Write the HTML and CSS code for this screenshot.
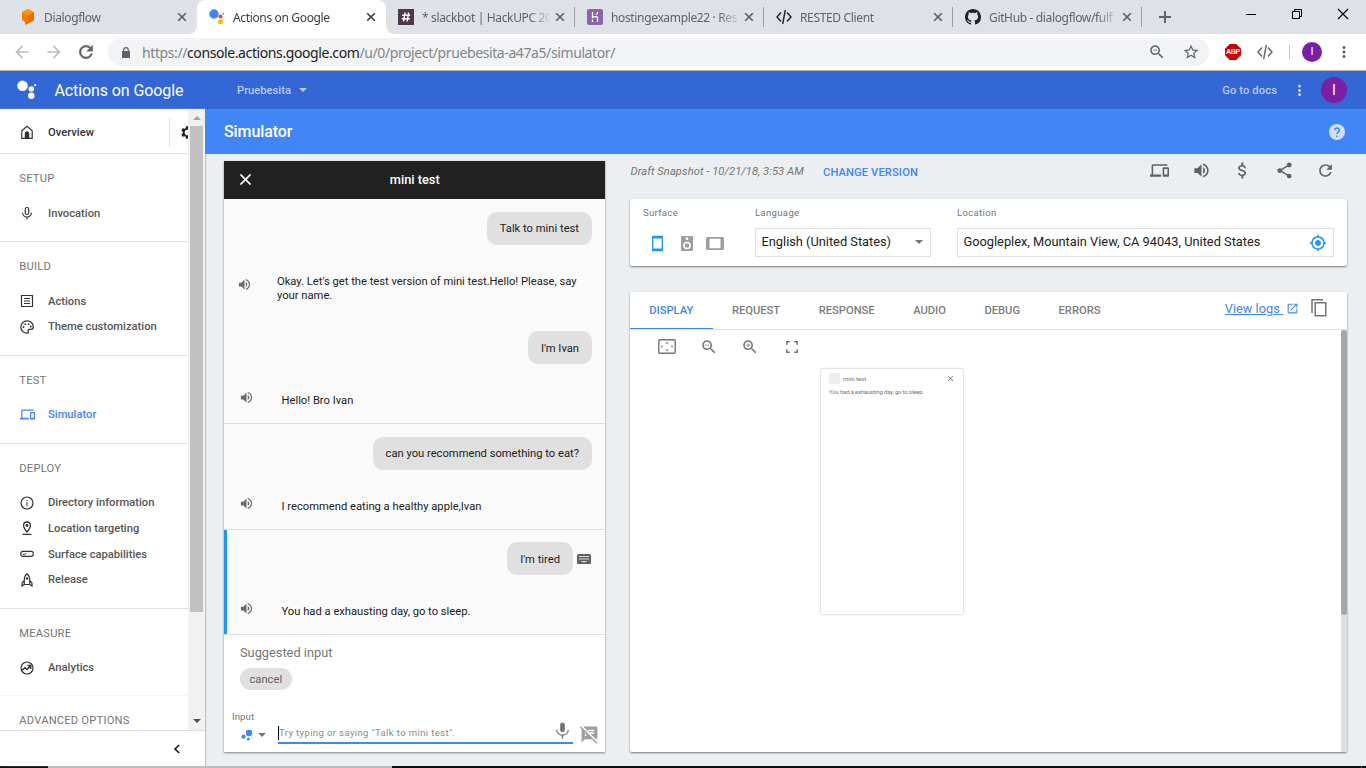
FILE: index.html
```html
<!DOCTYPE html>
<html lang="en">
<head>
    <meta charset="UTF-8">
    <meta name="viewport" content="width=device-width, initial-scale=1.0">
    <title>Actions on Google</title>
    <link rel="stylesheet" href="styles.css">
</head>
<body>
    <svg class="sprite" width="0" height="0">
        <symbol id="close" viewBox="0 0 24 24"><path d="M19 6.41L17.59 5 12 10.59 6.41 5 5 6.41 10.59 12 5 17.59 6.41 19 12 13.41 17.59 19 19 17.59 13.41 12z"/></symbol>
        <symbol id="refresh" viewBox="0 0 24 24"><path d="M17.65 6.35C16.2 4.9 14.21 4 12 4c-4.42 0-7.99 3.58-7.99 8s3.57 8 7.99 8c3.73 0 6.84-2.55 7.73-6h-2.08c-.82 2.33-3.04 4-5.65 4-3.31 0-6-2.69-6-6s2.69-6 6-6c1.66 0 3.14.69 4.22 1.78L13 11h7V4l-2.35 2.35z"/></symbol>
        <symbol id="arrow" viewBox="0 0 24 24"><path d="M20 11H7.83l5.59-5.59L12 4l-8 8 8 8 1.41-1.41L7.83 13H20v-2z"/></symbol>
        <symbol id="volume" viewBox="0 0 24 24"><path d="M3 9v6h4l5 5V4L7 9H3zm13.5 3c0-1.77-1.02-3.29-2.5-4.03v8.05c1.48-.73 2.5-2.25 2.5-4.02zM14 3.23v2.06c2.89.86 5 3.54 5 6.71s-2.11 5.85-5 6.71v2.06c4.01-.91 7-4.49 7-8.77s-2.99-7.86-7-8.77z"/></symbol>
        <symbol id="devices" viewBox="0 0 24 24"><path d="M4 6h18V4H4c-1.1 0-2 .9-2 2v11H0v3h14v-3H4V6zm19 2h-6c-.55 0-1 .45-1 1v10c0 .55.45 1 1 1h6c.55 0 1-.45 1-1V9c0-.55-.45-1-1-1zm-1 9h-4v-7h4v7z"/></symbol>
        <symbol id="more" viewBox="0 0 24 24"><path d="M12 8c1.100 0 2-.9 2-2s-.9-2-2-2-2 .9-2 2 .9 2 2 2zm0 2c-1.100 0-2 .9-2 2s.9 2 2 2 2-.9 2-2-.9-2-2-2zm0 6c-1.100 0-2 .9-2 2s.9 2 2 2 2-.9 2-2-.9-2-2-2z"/></symbol>
        <symbol id="zoom-out" viewBox="0 0 24 24"><path d="M15.500 14h-.79l-.28-.27C15.410 12.590 16 11.110 16 9.500 16 5.910 13.090 3 9.500 3S3 5.910 3 9.500 5.910 16 9.500 16c1.610 0 3.090-.59 4.230-1.570l.27.28v.79l5 4.990L20.490 19l-4.990-5zm-6 0C7.010 14 5 11.990 5 9.500S7.010 5 9.500 5 14 7.010 14 9.500 11.990 14 9.500 14zM7 9h5v1H7z"/></symbol>
        <symbol id="zoom-in" viewBox="0 0 24 24"><path d="M15.500 14h-.79l-.28-.27C15.410 12.590 16 11.110 16 9.500 16 5.910 13.090 3 9.500 3S3 5.910 3 9.500 5.910 16 9.500 16c1.610 0 3.090-.59 4.230-1.570l.27.28v.79l5 4.990L20.490 19l-4.990-5zm-6 0C7.010 14 5 11.990 5 9.500S7.010 5 9.500 5 14 7.010 14 9.500 11.990 14 9.500 14zM12 10h-2v2H9v-2H7V9h2V7h1v2h2v1z"/></symbol>
        <symbol id="code" viewBox="0 0 16 16"><path d="M5 3.500L1 8l4 4.500M11 3.500L15 8l-4 4.500M9.300 1L6.700 15" fill="none" stroke="currentColor" stroke-width="1.400"/></symbol>
        <symbol id="mic-outline" viewBox="0 0 24 24"><path d="M9 5.500a3 3 0 0 1 6 0v6a3 3 0 0 1-6 0zM4.500 11.500a7.500 7.500 0 0 0 15 0M12 19v4" fill="none" stroke="currentColor" stroke-width="2"/></symbol>
    </svg>

    <div class="browser">
        <div class="tabstrip">
            <div class="tab">
                <svg class="favicon" viewBox="0 0 16 16"><path d="M8 0l6 3.300v8L5 16v-3.200L2 11V3.300z" fill="#f57c00"/><path d="M8 0l6 3.300-6 3.200-6-3.200z" fill="#ff9800"/><path d="M14 3.300v8L5 16l3-3.500v-6z" fill="#ef6c00"/></svg>
                <span class="tab-title">Dialogflow</span>
                <svg class="tab-close"><use href="#close"/></svg>
            </div>
            <div class="tab tab-active">
                <svg class="favicon" viewBox="0 0 16 16"><circle cx="5" cy="5" r="4.700" fill="#4285f4"/><circle cx="11.500" cy="7.500" r="2" fill="#ea4335"/><circle cx="14.200" cy="4.700" r=".9" fill="#34a853"/><circle cx="11.500" cy="12.800" r="2.500" fill="#fbbc05"/></svg>
                <span class="tab-title">Actions on Google</span>
                <svg class="tab-close"><use href="#close"/></svg>
            </div>
            <div class="tab tab-sep">
                <svg class="favicon" viewBox="0 0 16 16"><path d="M0 0h16v16H0z" fill="#4d394b"/><path d="M7 3.500L5.600 12.500M10.600 3.500L9.200 12.500M4.200 6.300h8M3.800 9.700h8" stroke="#fff" stroke-width="1.500"/></svg>
                <span class="tab-title">* slackbot | HackUPC 20</span>
                <svg class="tab-close"><use href="#close"/></svg>
            </div>
            <div class="tab tab-sep">
                <svg class="favicon" viewBox="0 0 16 16"><rect width="16" height="16" rx="2" fill="#8b64ac"/><path d="M5.500 3v5.500c1.500-.8 5-1.500 5 .3V13M10.500 3c0 1-.4 2-1.200 2.700M5.500 10.500V13" fill="none" stroke="#fff" stroke-width="1.300"/></svg>
                <span class="tab-title">hostingexample22 · Res</span>
                <svg class="tab-close"><use href="#close"/></svg>
            </div>
            <div class="tab tab-sep">
                <svg class="favicon dark"><use href="#code"/></svg>
                <span class="tab-title">RESTED Client</span>
                <svg class="tab-close"><use href="#close"/></svg>
            </div>
            <div class="tab tab-sep">
                <svg class="favicon dark" viewBox="0 0 16 16"><path d="M8 0C3.580 0 0 3.580 0 8c0 3.540 2.290 6.530 5.470 7.590.4.07.55-.17.55-.38 0-.19-.01-.82-.01-1.490-2.010.37-2.530-.49-2.690-.94-.09-.23-.48-.94-.82-1.130-.28-.15-.68-.52-.01-.53.63-.01 1.080.58 1.230.82.72 1.210 1.870.87 2.330.66.07-.52.28-.87.51-1.070-1.780-.2-3.640-.89-3.640-3.950 0-.87.31-1.590.82-2.150-.08-.2-.36-1.020.08-2.120 0 0 .67-.21 2.200.82.64-.18 1.320-.27 2-.27s1.360.09 2 .27c1.530-1.040 2.200-.82 2.200-.82.44 1.100.16 1.920.08 2.120.51.56.82 1.270.82 2.150 0 3.070-1.870 3.750-3.650 3.950.29.25.54.73.54 1.480 0 1.070-.01 1.930-.01 2.200 0 .21.15.46.55.38A8.010 8.010 0 0 0 16 8c0-4.420-3.580-8-8-8z"/></svg>
                <span class="tab-title">GitHub - dialogflow/fulf</span>
                <svg class="tab-close"><use href="#close"/></svg>
            </div>
            <svg class="new-tab" viewBox="0 0 12 12"><path d="M6 0v12M0 6h12" stroke="#5f6368" stroke-width="2"/></svg>
            <div class="window-buttons">
                <svg viewBox="0 0 12 12"><path d="M1 6.500h10" stroke="#000"/></svg>
                <svg viewBox="0 0 12 12"><path d="M1.500 3.500h7v7h-7zM3.500 3.500v-2h7v7h-2" fill="none" stroke="#000"/></svg>
                <svg viewBox="0 0 12 12"><path d="M1 1l10 10M11 1L1 11" stroke="#000" stroke-width="1.100"/></svg>
            </div>
        </div>

        <div class="toolbar">
            <svg class="nav-icon disabled"><use href="#arrow"/></svg>
            <svg class="nav-icon disabled flip"><use href="#arrow"/></svg>
            <svg class="nav-icon reload"><use href="#refresh"/></svg>
            <div class="omnibox">
                <svg class="lock" viewBox="0 0 8 11"><path d="M0 4h8v7H0z"/><path d="M1.700 4.500V3a2.300 2.300 0 0 1 4.600 0v1.500" fill="none" stroke="currentColor" stroke-width="1.200"/></svg>
                <div class="url">https://<b>console.actions.google.com</b>/u/0/project/pruebesita-a47a5/simulator/</div>
                <svg class="omni-icon"><use href="#zoom-out"/></svg>
                <svg class="omni-icon star" viewBox="0 0 24 24"><path d="M22 9.240l-7.190-.62L12 2 9.190 8.630 2 9.240l5.460 4.730L5.820 21 12 17.270 18.180 21l-1.630-7.030L22 9.240zM12 15.400l-3.760 2.270 1-4.280-3.320-2.880 4.380-.38L12 6.100l1.710 4.040 4.380.38-3.320 2.880 1 4.280L12 15.400z"/></svg>
            </div>
            <div class="abp">ABP</div>
            <svg class="ext-code"><use href="#code"/></svg>
            <div class="toolbar-sep"></div>
            <div class="profile">I</div>
            <svg class="menu-dots"><use href="#more"/></svg>
        </div>
    </div>

    <header class="header">
        <svg class="logo" viewBox="0 0 22 20"><g fill="#fff"><circle cx="5.800" cy="5.500" r="5.500"/><circle cx="15" cy="9" r="2.900"/><circle cx="19" cy="5" r="1.200"/><circle cx="15" cy="16" r="3.400"/></g></svg>
        <div class="product">Actions on Google</div>
        <div class="project">Pruebesita <i class="caret"></i></div>
        <a class="docs">Go to docs</a>
        <svg class="header-dots"><use href="#more"/></svg>
        <div class="avatar">I</div>
    </header>

    <div class="page">
        <nav class="sidebar">
            <div class="side-body">
                <div class="side-list">
                    <div class="overview">
                        <div class="side-item">
                            <svg viewBox="0 0 14 14"><path d="M1.800 5.800L7 1.300l5.200 4.500v7.500H1.800z" fill="none" stroke="currentColor" stroke-width="1.200"/><path d="M4.800 8.500a2.200 2.200 0 0 1 4.400 0V13H4.800z"/></svg>
                            Overview
                        </div>
                        <div class="gear">
                            <svg viewBox="0 0 24 24"><path d="M19.430 12.980c.04-.32.07-.64.07-.98s-.03-.66-.07-.98l2.110-1.650c.19-.15.24-.42.12-.64l-2-3.460c-.12-.22-.39-.3-.61-.22l-2.490 1c-.52-.4-1.080-.73-1.690-.98l-.38-2.650C14.460 2.180 14.250 2 14 2h-4c-.25 0-.46.18-.49.42l-.38 2.650c-.61.25-1.170.59-1.690.98l-2.490-1c-.23-.09-.49 0-.61.22l-2 3.460c-.13.22-.07.49.12.64l2.110 1.650c-.04.32-.07.65-.07.98s.03.66.07.98l-2.110 1.650c-.19.15-.24.42-.12.64l2 3.460c.12.22.39.3.61.22l2.490-1c.52.4 1.080.73 1.690.98l.38 2.650c.03.24.24.42.49.42h4c.25 0 .46-.18.49-.42l.38-2.650c.61-.25 1.170-.59 1.690-.98l2.490 1c.23.09.49 0 .61-.22l2-3.460c.12-.22.07-.49-.12-.64l-2.110-1.650zM12 16.500a4.500 4.500 0 1 1 0-9 4.500 4.500 0 0 1 0 9z"/></svg>
                        </div>
                    </div>
                    <section>
                        <h3>SETUP</h3>
                        <div class="side-item"><svg><use href="#mic-outline"/></svg>Invocation</div>
                    </section>
                    <section>
                        <h3>BUILD</h3>
                        <div class="side-item"><svg viewBox="0 0 14 14"><path d="M1.500 1.500h11v11h-11zM4 4.500h6M4 7h6M4 9.500h6" fill="none" stroke="currentColor" stroke-width="1.200"/></svg>Actions</div>
                        <div class="side-item"><svg viewBox="0 0 14 14"><path d="M7 .8a6.200 6.200 0 1 0 0 12.400c1.300 0 1.600-1 1.200-1.800-.5-1 .1-2 1.200-2H11c1.400 0 2.300-1 2.300-2.400C13.300 3.200 10.500.8 7 .8z" fill="none" stroke="currentColor" stroke-width="1.300"/><circle cx="3.500" cy="7" r=".9"/><circle cx="5.300" cy="4.200" r=".9"/><circle cx="8.700" cy="4.200" r=".9"/><circle cx="10.800" cy="6.500" r=".9"/></svg>Theme customization</div>
                    </section>
                    <section>
                        <h3>TEST</h3>
                        <div class="side-item current"><svg><use href="#devices"/></svg>Simulator</div>
                    </section>
                    <section>
                        <h3>DEPLOY</h3>
                        <div class="side-item"><svg viewBox="0 0 14 14"><circle cx="7" cy="7" r="6" fill="none" stroke="currentColor" stroke-width="1.200"/><path d="M6.500 6.200h1v4h-1zM6.500 4h1v1.200h-1z"/></svg>Directory information</div>
                        <div class="side-item"><svg viewBox="0 0 14 14"><path d="M7 11C5 8.500 3.600 6.500 3.600 4.400a3.400 3.400 0 0 1 6.800 0C10.400 6.500 9 8.500 7 11zM2.500 13.400h9" fill="none" stroke="currentColor" stroke-width="1.300"/><circle cx="7" cy="4.500" r="1.400"/></svg>Location targeting</div>
                        <div class="side-item"><svg viewBox="0 0 14 14"><rect x=".8" y="4.300" width="12.400" height="5" rx="2" fill="none" stroke="currentColor" stroke-width="1.200"/><path d="M3 7l1.200 1 2-2" fill="none" stroke="currentColor"/></svg>Surface capabilities</div>
                        <div class="side-item"><svg viewBox="0 0 14 14"><path d="M7 .8C4.800 2.500 4.300 5 4.300 7v4.500h5.400V7c0-2-.5-4.500-2.700-6.200zM4.300 7.500L2 10v3l2.300-1.500M9.700 7.500L12 10v3l-2.300-1.500" fill="none" stroke="currentColor" stroke-width="1.200"/><circle cx="7" cy="5.500" r="1.200"/></svg>Release</div>
                    </section>
                    <section>
                        <h3>MEASURE</h3>
                        <div class="side-item"><svg viewBox="0 0 14 14"><path d="M2 9.500l3-2.800 2 1.800 3.500-3.800M7.500 4.500h3.200V8" fill="none" stroke="currentColor" stroke-width="1.500"/><circle cx="7" cy="7" r="6" fill="none" stroke="currentColor" stroke-width="1.200"/></svg>Analytics</div>
                    </section>
                    <section class="last">
                        <h3>ADVANCED OPTIONS</h3>
                    </section>
                </div>
                <div class="side-scroll">
                    <i class="up"></i>
                    <div class="side-thumb"></div>
                    <i class="down"></i>
                </div>
            </div>
            <div class="side-foot">
                <svg viewBox="0 0 8 10"><path d="M6.300 1L2 5l4.300 4" fill="none" stroke="#212121" stroke-width="1.700"/></svg>
            </div>
        </nav>

        <main class="main">
            <div class="titlebar">
                <h1>Simulator</h1>
                <svg class="help" viewBox="0 0 16 16"><circle cx="8" cy="8" r="8" fill="#d0e0fc"/><path d="M5.700 6.300a2.300 2.300 0 1 1 3.700 1.800c-.8.600-1.400 1-1.400 2M8 11.500v1.500" fill="none" stroke="#4285f4" stroke-width="1.500"/></svg>
            </div>

            <div class="workspace">
                <div class="chat">
                    <div class="chat-head">
                        <svg><use href="#close"/></svg>
                        <h2>mini test</h2>
                    </div>
                    <div class="turn">
                        <div class="query"><span>Talk to mini test</span></div>
                        <div class="reply reply-first">
                            <svg><use href="#volume"/></svg>
                            <p>Okay. Let's get the test version of mini test.Hello! Please, say<br>your name.</p>
                        </div>
                        <div class="query"><span class="low">I'm Ivan</span></div>
                        <div class="reply"><svg><use href="#volume"/></svg><p>Hello! Bro Ivan</p></div>
                    </div>
                    <div class="turn">
                        <div class="query"><span>can you recommend something to eat?</span></div>
                        <div class="reply"><svg><use href="#volume"/></svg><p>I recommend eating a healthy apple,Ivan</p></div>
                    </div>
                    <div class="turn turn-active">
                        <div class="query">
                            <span class="low">I'm tired</span>
                            <svg class="keyboard" viewBox="0 0 14 10"><rect width="14" height="10" rx="1.500"/><path d="M2 2.500h10M2 5h10" stroke="#fafafa" stroke-opacity=".8"/><path d="M4.500 7.700h5" stroke="#fafafa"/></svg>
                        </div>
                        <div class="reply"><svg><use href="#volume"/></svg><p>You had a exhausting day, go to sleep.</p></div>
                    </div>
                    <div class="suggest">
                        <div class="suggest-label">Suggested input</div>
                        <span class="chip">cancel</span>
                    </div>
                    <div class="input-area">
                        <div class="input-type">
                            <label>Input</label>
                            <div class="input-kind">
                                <svg viewBox="0 0 12 12"><circle cx="8" cy="4" r="3.200"/><circle cx="2.500" cy="7.700" r="2.100"/><circle cx="7.300" cy="10" r="1.500"/><circle cx="10.500" cy="8.500" r=".5"/></svg>
                                <i class="caret"></i>
                            </div>
                        </div>
                        <div class="input-field">
                            <span>Try typing or saying "Talk to mini test".</span>
                            <svg viewBox="0 0 24 24"><path d="M12 14c1.660 0 3-1.340 3-3V5c0-1.660-1.340-3-3-3S9 3.340 9 5v6c0 1.660 1.340 3 3 3zm6.500-3c0 3.500-3 6-6.500 6s-6.500-2.500-6.500-6H4c0 4 3.200 7 7 7.500V22h2v-3.500c3.800-.5 7-3.500 7-7.500z"/></svg>
                        </div>
                        <svg class="notes-off" viewBox="0 0 24 24"><path d="M10.540 11l-.54-.54L7.540 8 6 6.460 2.380 2.840 1.270 1.730 0 3l2.010 2.010L2 22l4-4h9l5.730 5.730L22 22.460 17.540 18l-7-7zM8 14H6v-2h2v2zm-2-3V9l2 2H6zm14-9H4.080L10 7.920V6h8v2h-7.920l1 1H18v2h-4.920l6.990 6.990C21.140 17.950 22 17.080 22 16V4c0-1.100-.9-2-2-2z"/></svg>
                    </div>
                </div>

                <div class="right">
                    <div class="version-row">
                        <span class="draft">Draft Snapshot - 10/21/18, 3:53 AM</span>
                        <a class="change">CHANGE VERSION</a>
                        <div class="actions">
                            <svg><use href="#devices"/></svg>
                            <svg><use href="#volume"/></svg>
                            <svg viewBox="0 0 24 24"><path d="M11.800 10.900c-2.270-.59-3-1.200-3-2.150 0-1.090 1.010-1.850 2.700-1.850 1.780 0 2.440.85 2.500 2.100h2.210c-.07-1.720-1.120-3.300-3.210-3.810V2h-2.500v3.160c-1.940.42-4 1.680-4 3.610 0 2.310 1.910 3.460 4.700 4.130 2.500.6 3 1.480 3 2.410 0 .69-.49 1.790-2.700 1.790-2.060 0-2.870-.92-2.980-2.100h-2.200c.12 2.190 1.760 3.420 4.180 3.830v3.170H13v-3.150c1.950-.37 3.500-1.500 3.500-3.550 0-2.840-2.430-3.810-4.700-4.400z"/></svg>
                            <svg viewBox="0 0 24 24"><path d="M18 16.080c-.76 0-1.440.3-1.960.77L8.910 12.700c.05-.23.09-.46.09-.7s-.04-.47-.09-.7l7.050-4.110c.54.5 1.250.81 2.040.81 1.660 0 3-1.340 3-3s-1.340-3-3-3-3 1.340-3 3c0 .24.04.47.09.7L8.040 9.810C7.500 9.310 6.790 9 6 9c-1.660 0-3 1.340-3 3s1.340 3 3 3c.79 0 1.500-.31 2.040-.81l7.120 4.160c-.05.21-.08.43-.08.65 0 1.610 1.310 2.920 2.920 2.920s2.920-1.310 2.920-2.920-1.310-2.920-2.920-2.920z"/></svg>
                            <svg><use href="#refresh"/></svg>
                        </div>
                    </div>

                    <div class="card settings">
                        <div class="setting surface">
                            <label>Surface</label>
                            <div class="surface-icons">
                                <svg class="phone" viewBox="0 0 12 17"><path d="M0 1a1 1 0 0 1 1-1h10a1 1 0 0 1 1 1v15a1 1 0 0 1-1 1H1a1 1 0 0 1-1-1zM1.500 3v11h9V3z" fill-rule="evenodd" fill="#2196f3"/></svg>
                                <svg class="speaker" viewBox="0 0 12 15"><rect width="12" height="15" rx="1" fill="#9e9e9e"/><circle cx="6" cy="2.700" r="1.400" fill="#fff"/><circle cx="6" cy="9.500" r="3.100" fill="#9e9e9e" stroke="#fff" stroke-width="1.500"/></svg>
                                <svg class="tablet" viewBox="0 0 18 13"><path d="M1.500 0h15A1.500 1.500 0 0 1 18 1.500v10a1.500 1.500 0 0 1-1.500 1.500h-15A1.500 1.500 0 0 1 0 11.500v-10A1.500 1.500 0 0 1 1.500 0zM3.500 1.800v9.400h11V1.800z" fill-rule="evenodd" fill="#9e9e9e"/></svg>
                            </div>
                        </div>
                        <div class="setting language">
                            <label>Language</label>
                            <div class="box">English (United States) <i class="caret"></i></div>
                        </div>
                        <div class="setting location">
                            <label>Location</label>
                            <div class="box">Googleplex, Mountain View, CA 94043, United States
                                <svg viewBox="0 0 24 24"><path d="M12 8c-2.210 0-4 1.790-4 4s1.790 4 4 4 4-1.790 4-4-1.790-4-4-4zm8.940 3A8.994 8.994 0 0 0 13 3.060V1h-2v2.060A8.994 8.994 0 0 0 3.060 11H1v2h2.060A8.994 8.994 0 0 0 11 20.940V23h2v-2.060A8.994 8.994 0 0 0 20.940 13H23v-2h-2.060zM12 19c-3.870 0-7-3.130-7-7s3.130-7 7-7 7 3.130 7 7-3.130 7-7 7z"/></svg>
                            </div>
                        </div>
                    </div>

                    <div class="card output">
                        <div class="tabs">
                            <a class="selected">DISPLAY</a>
                            <a>REQUEST</a>
                            <a>RESPONSE</a>
                            <a>AUDIO</a>
                            <a>DEBUG</a>
                            <a>ERRORS</a>
                            <div class="logs">
                                <span>View logs&nbsp;</span>
                                <svg class="open" viewBox="0 0 24 24"><path d="M19 19H5V5h7V3H5c-1.110 0-2 .9-2 2v14c0 1.100.89 2 2 2h14c1.100 0 2-.9 2-2v-7h-2v7zM14 3v2h3.590l-9.830 9.830 1.410 1.410L19 6.410V10h2V3h-7z"/></svg>
                                <svg class="copy" viewBox="0 0 16 18"><path d="M1 14V.800h11M4.200 3.800h10.600v13H4.200z" fill="none" stroke="#757575" stroke-width="1.500"/></svg>
                            </div>
                        </div>
                        <div class="display">
                            <div class="stage">
                                <div class="stage-tools">
                                    <svg class="fit" viewBox="0 0 18 15"><rect x=".8" y=".8" width="16.400" height="13.400" rx="1" fill="none" stroke="#757575" stroke-width="1.400"/><path d="M7.300 4.500L9 2.800l1.700 1.700zM7.300 10.500h3.400L9 12.200zM4.500 6v3L2.800 7.500zM13.500 6v3l1.700-1.500z"/></svg>
                                    <svg><use href="#zoom-out"/></svg>
                                    <svg><use href="#zoom-in"/></svg>
                                    <svg viewBox="0 0 24 24"><path d="M6 15H4v5h5v-2H6v-3zm-2-6h2V6h3V4H4v5zm14 9h-3v2h5v-5h-2v3zM15 4v2h3v3h2V4h-5z"/></svg>
                                </div>
                                <div class="device">
                                    <div class="device-head">
                                        <i class="device-logo"></i>
                                        <span>mini test</span>
                                        <svg><use href="#close"/></svg>
                                    </div>
                                    <p>You had a exhausting day, go to sleep.</p>
                                </div>
                            </div>
                            <div class="out-scroll"><div class="out-thumb"></div></div>
                        </div>
                    </div>
                </div>
            </div>
        </main>
    </div>
    <div class="taskbar"><i></i></div>
</body>
</html>
```

FILE: styles.css
```css
* {
    margin: 0;
    padding: 0;
    box-sizing: border-box;
}

body {
    width: 1366px;
    height: 768px;
    overflow: hidden;
    font-family: Roboto, sans-serif;
    font-size: 11.2px;
    color: #212121;
    background: #ebeff2;
    display: flex;
    flex-direction: column;
}

svg {
    display: block;
    flex: none;
    fill: currentColor;
}

.sprite {
    position: absolute;
}

.caret {
    border: 4.5px solid transparent;
    border-top-color: currentColor;
    border-bottom: 0;
    flex: none;
}

/* browser */
.browser {
    height: 71px;
    flex: none;
    background: #fff;
    border-bottom: 1px solid #b3b5b9;
    font-family: "Noto Sans", sans-serif;
}

.tabstrip {
    display: flex;
    align-items: center;
    height: 34px;
    padding-left: 8px;
    background: #dee1e6;
    color: #5f6368;
}

.tab {
    width: 189px;
    height: 34px;
    padding-left: 12px;
    display: flex;
    align-items: center;
    position: relative;
}

.tab-sep {
    background: linear-gradient(#9a9da3, #9a9da3) right center / 1px 20px no-repeat;
}

.tab-active {
    background: #fff;
    border-radius: 8px 8px 0 0;
    color: #3c4043;
}

.tab-active::before,
.tab-active::after {
    content: '';
    position: absolute;
    bottom: 0;
    width: 8px;
    height: 8px;
}

.tab-active::before {
    left: -8px;
    background: radial-gradient(circle at 0 0, transparent 7.5px, #fff 8px);
}

.tab-active::after {
    right: -8px;
    background: radial-gradient(circle at 100% 0, transparent 7.5px, #fff 8px);
}

.favicon {
    width: 16px;
    height: 16px;
}

.dark {
    color: #202124;
}

.tab-title {
    width: 128px;
    margin: 0 3px 0 8px;
    font-size: 12px;
    letter-spacing: -0.35px;
    white-space: nowrap;
    mask-image: linear-gradient(to right, #000 108px, transparent 130px);
}

.tab-close {
    width: 14px;
    height: 14px;
    stroke: currentColor;
}

.new-tab {
    width: 12px;
    height: 12px;
    margin-left: 17px;
}

.window-buttons {
    display: flex;
    gap: 34px;
    margin: -6px 17px 0 auto;
}

.window-buttons svg {
    width: 12px;
    height: 12px;
}

.toolbar {
    display: flex;
    align-items: center;
    height: 36px;
    padding-left: 12px;
    color: #5f6368;
}

.nav-icon {
    width: 20px;
    height: 20px;
    margin-right: 12px;
}

.reload {
    stroke: currentColor;
    stroke-width: .6;
}

.disabled {
    color: #babcbe;
}

.flip {
    transform: scaleX(-1);
}

.omnibox {
    width: 1101px;
    height: 28px;
    border-radius: 14px;
    background: #f1f3f4;
    display: flex;
    align-items: center;
    padding-left: 14px;
}

.lock {
    width: 8px;
    height: 11px;
    margin-right: 12px;
}

.url {
    flex: 1;
    font-size: 14px;
    letter-spacing: -0.4px;
    color: #80868b;
    white-space: nowrap;
}

.url b {
    font-weight: normal;
    color: #202124;
}

.omni-icon {
    width: 18px;
    height: 18px;
    margin-right: 16px;
}

.star {
    margin-right: 9px;
}

.abp {
    width: 16px;
    height: 16px;
    margin-left: 16px;
    background: #cc0000;
    clip-path: polygon(30% 0, 70% 0, 100% 30%, 100% 70%, 70% 100%, 30% 100%, 0 70%, 0 30%);
    color: #fff;
    font: bold 7px/16px "Liberation Sans", sans-serif;
    text-align: center;
    letter-spacing: -.2px;
}

.ext-code {
    width: 16px;
    height: 16px;
    margin: 0 16px;
}

.toolbar-sep {
    width: 1px;
    height: 16px;
    background: #c8cacd;
    margin-right: 12px;
}

.profile {
    width: 20px;
    height: 20px;
    border-radius: 50%;
    background: #7b1fa2;
    color: #fff;
    font: 11px/20px Roboto, sans-serif;
    text-align: center;
}

.menu-dots {
    width: 18px;
    height: 18px;
    margin-left: 13px;
}

/* console header */
.header {
    height: 38px;
    flex: none;
    display: flex;
    align-items: center;
    padding-left: 17px;
    background: #3367d6;
    color: #b8cbf2;
    font-weight: 500;
}

.logo {
    width: 21px;
    height: 20px;
    margin-right: 16.500px;
}

.product {
    width: 182.500px;
    font-size: 16px;
    font-weight: 400;
    letter-spacing: -.1px;
    color: #fff;
}

.project {
    display: flex;
    align-items: center;
    gap: 8px;
}

.docs {
    margin-left: auto;
    letter-spacing: .1px;
}

.header-dots {
    width: 17px;
    height: 17px;
    margin: 0 13.500px;
    color: #d6e1f7;
}

.avatar {
    width: 26px;
    height: 26px;
    margin-right: 19px;
    border-radius: 50%;
    background: #7b1fa2;
    color: #fff;
    font: 14px/26px Roboto, sans-serif;
    text-align: center;
}

.page {
    display: flex;
    height: 657px;
    flex: none;
}

/* sidebar */
.sidebar {
    width: 205px;
    background: #fff;
    box-shadow: 1px 0 1px #bfc4c8;
    position: relative;
}

.side-body {
    display: flex;
    height: 621px;
    overflow: hidden;
}

.side-list {
    width: 188px;
    overflow: hidden;
}

.overview {
    height: 45px;
    display: flex;
    align-items: center;
    padding-top: 2px;
    border-bottom: 1px solid #e0e0e0;
}

.overview .side-item {
    width: 169px;
    color: #333;
}

.gear {
    width: 19px;
    height: 29px;
    overflow: hidden;
    border-left: 1px solid #e0e0e0;
    display: flex;
    align-items: center;
}

.gear svg {
    width: 15px;
    height: 15px;
    margin-left: 10px;
}

.side-list section {
    padding: 12px 0 15.2px;
    border-bottom: 1px solid #e0e0e0;
}

.side-list section:nth-last-child(2) {
    padding-bottom: 14.4px;
    border-color: #f5f5f5;
}

.side-list h3 {
    margin-bottom: 8.7px;
    padding-left: 19.3px;
    font-size: 11.2px;
    font-weight: 400;
    line-height: 25.6px;
    letter-spacing: .2px;
    color: #757575;
}

.side-item {
    display: flex;
    align-items: center;
    height: 25.6px;
    padding-left: 20px;
    font-weight: 500;
    color: #555;
}

.side-item svg {
    width: 14px;
    height: 14px;
    margin-right: 14px;
    color: #333;
}

.side-list .current,
.side-list .current svg {
    color: #4285f4;
}

.side-list .current svg {
    width: 17px;
    height: 15px;
    margin: 0 12px 0 -1px;
}

.side-scroll {
    width: 17px;
    background: #f1f1f1;
    display: flex;
    flex-direction: column;
    align-items: center;
}

.up,
.down {
    border: 4px solid transparent;
}

.up {
    border-top: 0;
    border-bottom-color: #a3a3a3;
    margin: 7px 0 6px;
}

.side-thumb {
    width: 13px;
    height: 486px;
    background: #c1c1c1;
}

.down {
    border-bottom: 0;
    border-top-color: #505050;
    margin: auto 0 7px;
}

.side-foot {
    height: 36px;
    border-top: 1px solid #e0e0e0;
    display: flex;
    align-items: center;
    justify-content: flex-end;
    padding-right: 24px;
}

.side-foot svg {
    width: 8px;
    height: 10px;
}

/* main area */
.main {
    flex: 1;
}

.titlebar {
    position: relative;
    z-index: 1;
    height: 45px;
    padding: 0 21px 0 19px;
    background: #4285f4;
    display: flex;
    align-items: center;
    justify-content: space-between;
}

.titlebar h1 {
    color: #fff;
    font-size: 16px;
    font-weight: 500;
    letter-spacing: -.1px;
}

.help {
    width: 16px;
    height: 16px;
}

.workspace {
    display: flex;
    gap: 25px;
    padding: 7px 19px 0;
}

.chat {
    width: 381px;
    height: 591px;
    background: #fff;
    box-shadow: 0 1px 2px rgba(0, 0, 0, .45);
    display: flex;
    flex-direction: column;
}

.chat-head {
    height: 38px;
    padding-bottom: 2px;
    background: #212121;
    color: #fff;
    display: flex;
    align-items: center;
}

.chat-head svg {
    width: 19px;
    height: 19px;
    margin-left: 11.500px;
    stroke: currentColor;
    stroke-width: .3;
}

.chat-head h2 {
    flex: 1;
    padding-right: 30px;
    font-size: 12.8px;
    font-weight: 500;
    text-align: center;
}

.turn {
    background: #fafafa;
    border-bottom: 1px solid #e0e0e0;
}

.turn-active {
    box-shadow: inset 3px 0 #2196f3;
}

.query {
    display: flex;
    justify-content: flex-end;
    align-items: center;
    padding: 13px 13px 0 0;
}

.turn-active .query {
    padding-top: 12px;
}

.query span {
    height: 33px;
    padding: 0 13px;
    line-height: 33px;
    border-radius: 10px;
    background: #e0e0e0;
}

.query .low {
    line-height: 35px;
}

.keyboard {
    width: 14px;
    height: 10px;
    margin: 0 1px 0 4px;
    color: #616161;
}

.reply {
    height: 59px;
    display: flex;
    padding: 30px 0 0 15px;
    line-height: 14px;
}

.reply svg {
    width: 15px;
    height: 15px;
    margin: -4px 27.500px 0 0;
    color: #6b6b6b;
}

.reply-first {
    height: 73px;
    padding-left: 13px;
}

.reply-first svg {
    margin: 2px 25px 0 0;
}

.suggest {
    padding: 8px 16px 0;
    color: #757575;
}

.suggest-label {
    font-size: 12.8px;
    line-height: 20px;
    margin-bottom: 5px;
}

.chip {
    display: inline-block;
    height: 22px;
    padding: 0 9.500px;
    line-height: 23px;
    border-radius: 11px;
    background: #e0e0e0;
    color: #616161;
}

.input-area {
    display: flex;
    margin-top: auto;
    height: 41px;
    padding-left: 8px;
    color: #757575;
}

.input-type {
    width: 46px;
}

label {
    font-size: 9.6px;
    letter-spacing: .3px;
    color: #757575;
}

.input-type label {
    display: block;
    line-height: 12px;
    letter-spacing: .1px;
}

.input-kind {
    display: flex;
    align-items: center;
    gap: 5px;
    margin: 6px 0 0 9px;
}

.input-kind svg {
    width: 12px;
    height: 12px;
    color: #4285f4;
}

.input-field {
    width: 295px;
    height: 33px;
    border-bottom: 2px solid #4285f4;
    display: flex;
    align-items: center;
    justify-content: space-between;
    padding-top: 12px;
    font-size: 9.6px;
    letter-spacing: .35px;
    color: #8a8a8a;
}

.input-field span {
    border-left: 1px solid #000;
    line-height: 14px;
}

.input-field svg {
    width: 19px;
    height: 19px;
    margin: -5px 1px 0 0;
    color: #757575;
}

.notes-off {
    width: 19px;
    height: 19px;
    margin: 14px 0 0 6.500px;
    color: #9e9e9e;
}

/* right column */
.right {
    width: 717px;
}

.version-row {
    height: 38px;
    display: flex;
    align-items: center;
    padding-bottom: 19px;
}

.draft {
    font-style: italic;
    color: #757575;
    letter-spacing: .05px;
    width: 193px;
    margin-top: 2px;
    padding-left: .5px;
    white-space: nowrap;
}

.change {
    color: #4285f4;
    font-weight: 500;
    letter-spacing: .1px;
    margin-top: 3px;
}

.actions {
    display: flex;
    gap: 22.600px;
    margin: 0 11.700px 0 auto;
    color: #616161;
}

.actions svg {
    width: 19px;
    height: 19px;
}

.card {
    background: #fff;
    box-shadow: 0 1px 2px rgba(0, 0, 0, .5);
    border-radius: 2px;
}

.settings {
    height: 67px;
    display: flex;
    padding: 8px 13px 0 13px;
}

.setting label {
    display: block;
    height: 21px;
    line-height: 12px;
}

.surface {
    width: 112px;
}

.surface-icons {
    display: flex;
    align-items: center;
    height: 31px;
    padding-left: 9px;
}

.phone {
    width: 11px;
    height: 17px;
    margin-right: 17.500px;
}

.speaker {
    width: 12px;
    height: 15px;
    margin-right: 13.500px;
}

.tablet {
    width: 18px;
    height: 13px;
}

.box {
    display: flex;
    align-items: center;
    justify-content: space-between;
    height: 29px;
    padding: 0 7px 2px 5.500px;
    border: 1px solid #e0e0e0;
    font-size: 12.8px;
    white-space: nowrap;
}

.box .caret {
    color: #757575;
    border-width: 4px 4px 0;
}

.box svg {
    width: 18px;
    height: 18px;
    margin: 2px -1px 0 0;
    color: #2196f3;
}

.language {
    width: 176px;
    margin-right: 26px;
}

.location {
    width: 377px;
}

.output {
    height: 460px;
    margin-top: 26px;
    border-radius: 0 0 2px 2px;
}

.tabs {
    height: 38px;
    display: flex;
    border-bottom: 1px solid #e0e0e0;
}

.tabs a {
    height: 37px;
    padding: 0 19.240px;
    line-height: 37px;
    color: #7c7c7c;
    font-weight: 500;
}

.tabs .selected {
    color: #4285f4;
    border-bottom: 1px solid #4285f4;
}

.logs {
    display: flex;
    align-items: center;
    margin: -5px 20px 0 auto;
    color: #4285f4;
    font-size: 12.8px;
}

.logs span {
    text-decoration: underline;
}

.open {
    width: 13px;
    height: 13px;
    margin: 0 12px 0 3px;
}

.copy {
    width: 16px;
    height: 18px;
}

.display {
    display: flex;
    height: 422px;
}

.stage {
    flex: 1;
}

.stage-tools {
    display: flex;
    align-items: center;
    height: 33px;
    padding-left: 28px;
    gap: 23.700px;
    color: #757575;
}

.stage-tools svg {
    width: 18px;
    height: 18px;
}

.stage-tools .fit {
    height: 15px;
}

.device {
    width: 142px;
    height: 245px;
    margin: 6px 0 0 191px;
    padding: 4px 8px;
    box-shadow: 0 0 2px rgba(0, 0, 0, .35);
    color: #757575;
    font-size: 6px;
}

.device-head {
    display: flex;
    align-items: center;
    height: 11px;
}

.device-logo {
    width: 11px;
    height: 11px;
    margin-right: 3px;
    background: #eee;
}

.device-head svg {
    width: 9px;
    height: 9px;
    margin-left: auto;
}

.device p {
    margin-top: 4px;
    letter-spacing: -.17px;
    white-space: nowrap;
}

.out-scroll {
    width: 6px;
    background: #e0e0e0;
}

.out-thumb {
    height: 285px;
    border-radius: 3px;
    background: #a6a6a6;
}

.taskbar {
    height: 2px;
    flex: none;
    background: linear-gradient(to right, #101010 48px, #bdbdbd 48px, #bdbdbd 392px, #101010 392px);
}

.taskbar i {
    display: block;
    width: 1px;
    height: 2px;
    margin-left: 1361px;
    background: #555;
}
```
